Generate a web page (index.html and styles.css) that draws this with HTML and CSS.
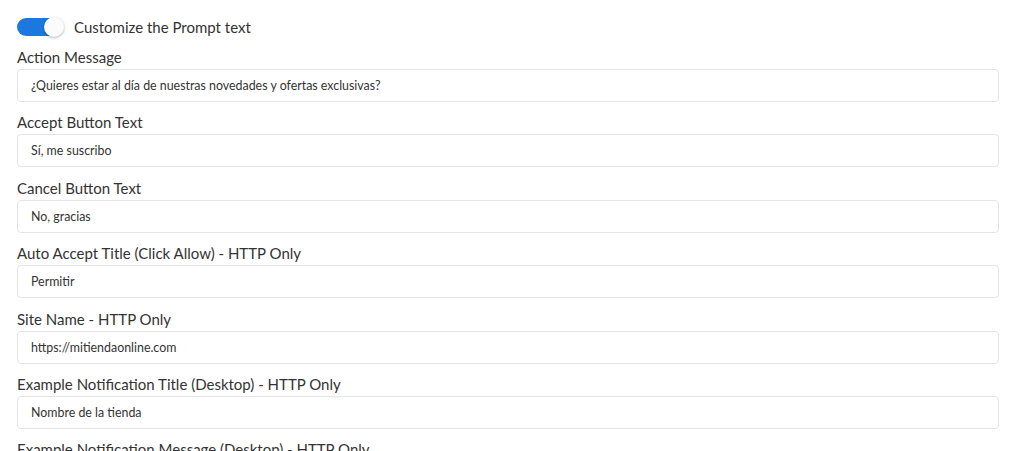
FILE: index.html
```html
<!DOCTYPE html>
<html lang="es">
<head>
<meta charset="utf-8">
<link rel="stylesheet" href="styles.css">
</head>
<body>
<div class="form">
  <div class="toggle-row">
    <span class="toggle"><span class="knob"></span></span>
    <span class="toggle-label">Customize the Prompt text</span>
  </div>
  <div class="field">
    <label class="label">Action Message</label>
    <div class="input">¿Quieres estar al día de nuestras novedades y ofertas exclusivas?</div>
  </div>
  <div class="field">
    <label class="label">Accept Button Text</label>
    <div class="input">Sí, me suscribo</div>
  </div>
  <div class="field">
    <label class="label">Cancel Button Text</label>
    <div class="input">No, gracias</div>
  </div>
  <div class="field">
    <label class="label">Auto Accept Title (Click Allow) - HTTP Only</label>
    <div class="input">Permitir</div>
  </div>
  <div class="field">
    <label class="label">Site Name - HTTP Only</label>
    <div class="input">https://mitiendaonline.com</div>
  </div>
  <div class="field">
    <label class="label">Example Notification Title (Desktop) - HTTP Only</label>
    <div class="input">Nombre de la tienda</div>
  </div>
  <div class="field">
    <label class="label">Example Notification Message (Desktop) - HTTP Only</label>
    <div class="input"></div>
  </div>
</div>
</body>
</html>
```
FILE: styles.css
```css
html, body {
  margin: 0;
  padding: 0;
  background: #ffffff;
  overflow: hidden;
}
body {
  font-family: Lato, "Open Sans", sans-serif;
  color: #333333;
}
.form {
  padding: 17px 25px 0 17px;
}
.toggle-row {
  display: flex;
  align-items: center;
  gap: 11px;
  height: 20px;
}
.toggle {
  position: relative;
  width: 46px;
  height: 18px;
  border-radius: 9px;
  background: #1a78e0;
  flex: none;
}
.knob {
  position: absolute;
  right: -1px;
  top: -1px;
  width: 20px;
  height: 20px;
  border-radius: 50%;
  background: #fbfbfb;
  box-shadow: 0 1px 3px rgba(0,0,0,0.3);
}
.toggle-label {
  font-size: 15px;
  line-height: 20px;
  color: #333;
}
.field {
  margin-top: 10px;
}
.field + .field {
  margin-top: 10.4px;
}
.label {
  display: block;
  font-size: 15px;
  line-height: 20px;
  margin-bottom: 2px;
  color: #333;
}
.input {
  box-sizing: border-box;
  height: 33px;
  border: 1px solid #e4e4e4;
  border-radius: 4px;
  padding: 0 13px;
  font-size: 12.4px;
  line-height: 31px;
  color: #333;
  background: #fff;
}
```
